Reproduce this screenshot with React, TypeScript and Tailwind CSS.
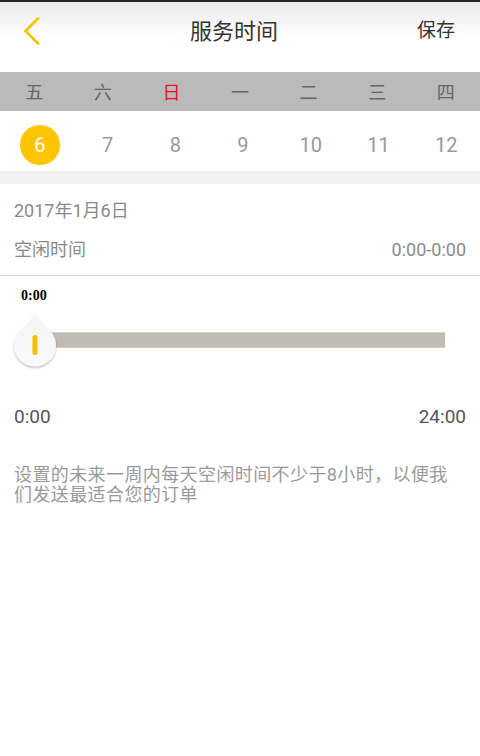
const weekdays = ['五', '六', '日', '一', '二', '三', '四'];
const dates = [6, 7, 8, 9, 10, 11, 12];

function SliderThumb() {
  return (
    <svg width="48" height="60" viewBox="0 0 48 60" className="absolute left-[11px] top-0">
      <defs>
        <linearGradient id="thumbFill" x1="0" y1="0" x2="0" y2="1">
          <stop offset="0" stopColor="#f4f4f4" />
          <stop offset="1" stopColor="#fafafa" />
        </linearGradient>
        <filter id="thumbShadow" x="-20%" y="-20%" width="140%" height="140%">
          <feDropShadow dx="0" dy="1.5" stdDeviation="1.2" floodColor="#000" floodOpacity="0.28" />
        </filter>
      </defs>
      <path
        d="M24 2 C27 9 31 13 36 17 A21 21 0 1 1 12 17 C17 13 21 9 24 2 Z"
        fill="url(#thumbFill)"
        filter="url(#thumbShadow)"
      />
      <rect x="21.5" y="24" width="5" height="20" rx="2.5" fill="#f6bf00" />
    </svg>
  );
}

export default function App() {
  return (
    <div className="w-[480px] h-[756px] bg-white overflow-hidden font-['Roboto','Noto_Sans_CJK_SC',sans-serif]">
      {/* Header */}
      <div className="relative h-[72px] border-t-2 border-[#222] bg-gradient-to-b from-[#e9e9e9] via-white to-white flex items-center justify-center">
        <svg width="20" height="30" viewBox="0 0 20 30" className="absolute left-[22px] top-[15px]">
          <path d="M16 1.5 L3.5 14 L16 26.5" fill="none" stroke="#f7c100" strokeWidth="2.6" strokeLinecap="square" />
        </svg>
        <span className="text-[22px] leading-[28px] text-[#333] -mt-[10px] -ml-[12px]">服务时间</span>
        <span className="absolute right-[25px] top-[15px] text-[19px] leading-[28px] text-[#333]">保存</span>
      </div>

      {/* Week bar */}
      <div className="grid grid-cols-7 h-[39px] pt-[3px] bg-[#bababa] items-center">
        {weekdays.map((d) => (
          <span key={d} className={`text-center text-[18px] leading-[24px] ${d === '日' ? 'text-[#e8101a]' : 'text-[#666]'}`}>
            {d}
          </span>
        ))}
      </div>

      {/* Dates */}
      <div className="grid grid-cols-7 h-[60px] pt-[8px] pl-[6px] items-center">
        {dates.map((n, i) => (
          <div key={n} className="flex justify-center">
            {i === 0 ? (
              <span className="w-[40px] h-[40px] rounded-full bg-[#fcc500] text-white text-[20px] flex items-center justify-center">
                {n}
              </span>
            ) : (
              <span className="text-[20px] leading-[40px] text-[#9a9a9a]">{n}</span>
            )}
          </div>
        ))}
      </div>

      <div className="h-[13px] bg-[#f1f1f1]" />

      {/* Day info */}
      <div className="px-[14px] pt-[15px] pb-[13px] border-b border-[#d9d9d9]">
        <p className="text-[18px] leading-[24px] text-[#8a8a8a]">2017年1月6日</p>
        <div className="mt-[15px] flex justify-between text-[18px] leading-[24px] text-[#8a8a8a]">
          <span>空闲时间</span>
          <span>0:00-0:00</span>
        </div>
      </div>

      {/* Slider */}
      <p className="mt-[12px] ml-[21px] text-[14px] leading-[16px] font-bold text-black font-['Liberation_Serif',serif]">0:00</p>
      <div className="relative mt-[7px] pt-[21px] h-[58px]">
        <div className="ml-[50px] w-[395px] h-[16px] bg-[#bfbcb4] border-t border-[#d6d3cc] border-b border-b-[#cfccc5]" />
        <SliderThumb />
      </div>

      <div className="mt-[36px] px-[14px] flex justify-between text-[19px] leading-[24px] text-[#555]">
        <span>0:00</span>
        <span>24:00</span>
      </div>

      <p className="mt-[36px] pl-[14px] pr-[24px] text-[18px] leading-[20px] tracking-[0.4px] text-[#9a9a9a]">
        设置的未来一周内每天空闲时间不少于8小时，以便我们发送最适合您的订单
      </p>
    </div>
  );
}
